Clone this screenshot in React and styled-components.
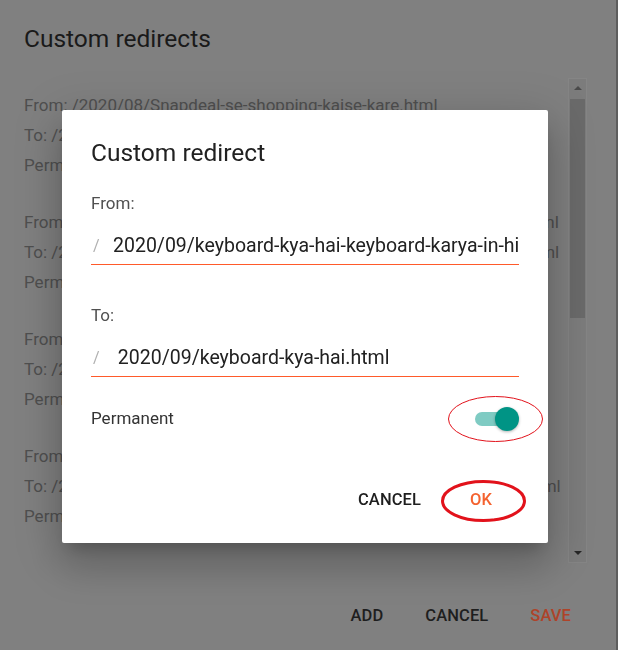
import React from "react";
import styled, { createGlobalStyle } from "styled-components";

const GlobalStyle = createGlobalStyle`
  html, body {
    margin: 0;
    padding: 0;
    background: #5e5e5e;
    font-family: Roboto, "Liberation Sans", Arial, sans-serif;
  }
  * { box-sizing: border-box; }
`;

const redirects = [
  {
    from: "/2020/08/Snapdeal-se-shopping-kaise-kare.html",
    to: "/2020/08/snapdeal-se-online-shopping.html",
  },
  {
    from: "/2020/09/keyboard-kya-hai-keyboard-karya-in-hindi-jaankari.html",
    to: "/2020/09/keyboard-kya-hai-keyboard-ke-prakar-in-hindi-me-jan.html",
  },
  {
    from: "/2020/09/mouse-kya-hai-mouse-ke-prakar.html",
    to: "/2020/09/mouse-kya-hai-in-hindi.html",
  },
  {
    from: "/2020/10/computer-generation-kya-hai.html",
    to: "/2020/10/computer-ki-generations-kitni-hoti-hain-in-hindi-mein.html",
  },
];

const Page = styled.div`
  width: 616px;
  height: 650px;
  background: #808080;
  padding: 24px 29px 0 24px;
  display: flex;
  flex-direction: column;
`;

const PageTitle = styled.h2`
  margin: 0;
  font-size: 24.5px;
  line-height: 30px;
  font-weight: 400;
  color: #1a1a1a;
`;

const Body = styled.div`
  margin-top: 24px;
  height: 485px;
  display: flex;
`;

const List = styled.div`
  flex: 1;
  padding-top: 12px;
  overflow: hidden;
`;

const Entry = styled.div`
  margin-bottom: 27px;
`;

const EntryLine = styled.div`
  font-size: 17px;
  line-height: 30px;
  height: 30px;
  color: #4f4f4f;
  white-space: nowrap;
`;

const Track = styled.div`
  width: 19px;
  background: #7c7c7c;
  border: 1px solid #858585;
  display: flex;
  flex-direction: column;
  align-items: center;
`;

const Arrow = styled.div`
  height: 18px;
  width: 100%;
  display: flex;
  align-items: center;
  justify-content: center;
  &::after {
    content: "";
    border-left: 4px solid transparent;
    border-right: 4px solid transparent;
    ${(p) =>
      p.$down
        ? "border-top: 4px solid #262626;"
        : "border-bottom: 4px solid #4a4a4a;"}
  }
`;

const Thumb = styled.div`
  width: 15px;
  height: 219px;
  margin-top: 2px;
  background: #6a6a6a;
`;

const Spacer = styled.div`
  flex: 1;
`;

const Footer = styled.div`
  margin-top: 35px;
  display: flex;
  justify-content: flex-end;
  gap: 10px;
`;

const TextButton = styled.button`
  border: none;
  background: transparent;
  font-family: inherit;
  font-size: 16.5px;
  font-weight: 500;
  letter-spacing: 0.1px;
  text-transform: uppercase;
  line-height: 36px;
  padding: 0 ${(p) => p.$pad || 8}px;
  min-width: ${(p) => p.$min || 0}px;
  color: ${(p) => p.$color || "#1e1e1e"};
  position: relative;
`;

const Scrim = styled.div`
  position: fixed;
  inset: 0;
  display: flex;
  align-items: center;
  justify-content: center;
  padding-right: 8px;
  padding-top: 2px;
`;

const Dialog = styled.div`
  width: 486px;
  height: 433px;
  background: #fff;
  border-radius: 2px;
  padding: 29px 29px 0 29px;
  box-shadow: 0 11px 15px -7px rgba(0, 0, 0, 0.2),
    0 24px 38px 3px rgba(0, 0, 0, 0.14), 0 9px 46px 8px rgba(0, 0, 0, 0.12);
  display: flex;
  flex-direction: column;
`;

const DialogTitle = styled.h3`
  margin: 0;
  font-size: 24.5px;
  line-height: 28px;
  font-weight: 400;
  color: #212121;
`;

const Label = styled.label`
  display: block;
  margin-top: ${(p) => p.$top}px;
  font-size: 17px;
  line-height: 20px;
  color: #505050;
`;

const Field = styled.div`
  margin-top: 21px;
  display: flex;
  align-items: center;
  height: 31px;
  padding-bottom: 6px;
  border-bottom: 1.5px solid #ff5a2a;
`;

const Prefix = styled.span`
  width: 22px;
  padding-left: 2px;
  font-size: 16px;
  color: #b0b0b0;
`;

const Input = styled.input`
  flex: 1;
  min-width: 0;
  border: none;
  outline: none;
  padding: 0;
  font-family: inherit;
  font-size: 19.5px;
  line-height: 24px;
  color: #212121;
  background: transparent;
`;

const SwitchRow = styled.div`
  margin-top: 26px;
  height: 30px;
  display: flex;
  align-items: center;
  justify-content: space-between;
  font-size: 17px;
  color: #333;
`;

const Switch = styled.div`
  position: relative;
  width: 44px;
  height: 24px;
  margin-top: 3px;
  display: flex;
  align-items: center;
`;

const SwitchTrack = styled.div`
  width: 38px;
  height: 14px;
  border-radius: 7px;
  background: #7fcbc3;
`;

const SwitchThumb = styled.div`
  position: absolute;
  right: 0;
  top: 0;
  width: 24px;
  height: 24px;
  border-radius: 50%;
  background: #009485;
  box-shadow: 0 1px 3px rgba(0, 0, 0, 0.3);
`;

const Actions = styled.div`
  margin-top: 49px;
  margin-right: 6px;
  display: flex;
  justify-content: flex-end;
  gap: 20px;
`;

const Mark = styled.svg`
  position: absolute;
  pointer-events: none;
  overflow: visible;
`;

function Ellipse({ style, w, h, stroke }) {
  return (
    <Mark style={style} width={w} height={h} viewBox={`0 0 ${w} ${h}`}>
      <ellipse
        cx={w / 2}
        cy={h / 2}
        rx={w / 2 - stroke / 2}
        ry={h / 2 - stroke / 2}
        fill="none"
        stroke="#e2121b"
        strokeWidth={stroke}
      />
    </Mark>
  );
}

export default function App() {
  return (
    <>
      <GlobalStyle />
      <Page>
        <PageTitle>Custom redirects</PageTitle>
        <Body>
          <List>
            {redirects.map((r, i) => (
              <Entry key={i}>
                <EntryLine>From: {r.from}</EntryLine>
                <EntryLine>To: {r.to}</EntryLine>
                <EntryLine>Permanent: Yes</EntryLine>
              </Entry>
            ))}
          </List>
          <Track>
            <Arrow />
            <Thumb />
            <Spacer />
            <Arrow $down />
          </Track>
        </Body>
        <Footer>
          <TextButton $pad={16}>Add</TextButton>
          <TextButton $pad={16}>Cancel</TextButton>
          <TextButton $pad={16} $color="#ae4329">Save</TextButton>
        </Footer>
      </Page>

      <Scrim>
        <Dialog>
          <DialogTitle>Custom redirect</DialogTitle>
          <Label $top={26}>From:</Label>
          <Field>
            <Prefix>/</Prefix>
            <Input readOnly value="2020/09/keyboard-kya-hai-keyboard-karya-in-hindi.html" />
          </Field>
          <Label $top={40}>To:</Label>
          <Field>
            <Prefix>/</Prefix>
            <Input readOnly value=" 2020/09/keyboard-kya-hai.html" />
          </Field>
          <SwitchRow>
            Permanent
            <Switch>
              <SwitchTrack />
              <SwitchThumb />
              <Ellipse
                w={95}
                h={46}
                stroke={1}
                style={{ left: -27, top: -11 }}
              />
            </Switch>
          </SwitchRow>
          <Actions>
            <TextButton>Cancel</TextButton>
            <TextButton $min={64} $color="#f4622f">
              OK
              <Ellipse
                w={85}
                h={42}
                stroke={3}
                style={{ left: -8, top: -2 }}
              />
            </TextButton>
          </Actions>
        </Dialog>
      </Scrim>
    </>
  );
}
